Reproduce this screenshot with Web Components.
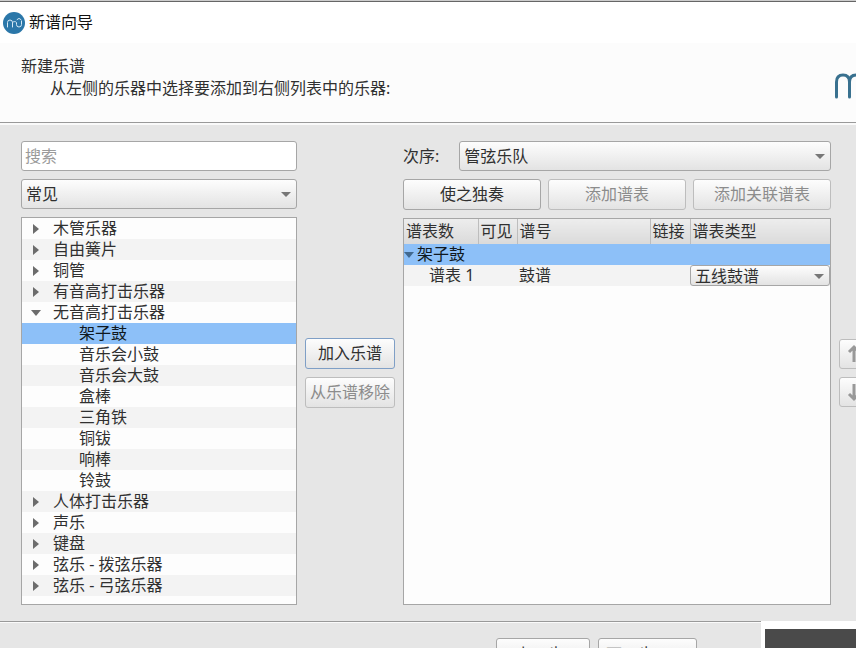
<!DOCTYPE html>
<html lang="zh-CN">
<head>
<meta charset="utf-8">
<title>新谱向导</title>
<style>
  * { box-sizing: border-box; }
  body {
    margin: 0;
    --ink: #303030;
    --muted: #8c8c8c;
    --line: #a6a6a6;
    --select: #8dc0f8;
    --stripe: #f3f3f3;
    --face: linear-gradient(#fdfdfd, #e3e3e3);
    color: var(--ink);
    background: #e6e6e6;
    font: 16px/21px "Noto Sans", "Noto Sans CJK SC", sans-serif;
  }
</style>
</head>
<body>
<score-wizard></score-wizard>

<script>
const define = (name, html, setup) => {
  const template = document.createElement('template');
  template.innerHTML = `<style>
    *, :host { box-sizing: border-box; }
    button, input, select { font: inherit; color: inherit; }
  </style>` + html;
  customElements.define(name, class extends HTMLElement {
    constructor() {
      super();
      this.attachShadow({ mode: 'open' });
      this.shadowRoot.appendChild(template.content.cloneNode(true));
    }
    connectedCallback() {
      if (setup) setup(this, this.shadowRoot);
    }
  });
};

define('push-button', `
  <style>
    :host { display: block; height: 31px; }
    button {
      display: flex;
      align-items: center;
      justify-content: center;
      width: 100%;
      height: 100%;
      padding: 0;
      white-space: nowrap;
      border: 1px solid var(--line);
      border-radius: 3px;
      background: var(--face);
    }
    :host([default]) button { border-color: #7f9fc6; }
    button:disabled { color: var(--muted); border-color: #bdbdbd; }
  </style>
  <button type="button"><slot></slot></button>
`, (host, root) => {
  const button = root.querySelector('button');
  button.disabled = host.hasAttribute('disabled');
  if (host.title) button.setAttribute('aria-label', host.title);
});

define('combo-box', `
  <style>
    :host { display: flex; align-items: center; gap: 20px; height: 30px; }
    .box { position: relative; flex: 1; height: 100%; }
    label:empty { display: none; }
    select {
      appearance: none;
      display: block;
      width: 100%;
      height: 100%;
      padding: 0 24px 0 4px;
      border: 1px solid var(--line);
      border-radius: 3px;
      background: var(--face);
    }
    svg { position: absolute; right: 6px; top: calc(50% - 2px); pointer-events: none; }
  </style>
  <label for="s"></label>
  <div class="box">
    <select id="s"></select>
    <svg width="10" height="6" viewBox="0 0 10 6"><path d="M0 0h10L5 5z" fill="#777"/></svg>
  </div>
`, (host, root) => {
  root.querySelector('label').textContent = host.getAttribute('label') || '';
  const select = root.querySelector('select');
  select.add(new Option(host.getAttribute('value')));
  if (!host.hasAttribute('label')) select.setAttribute('aria-label', host.getAttribute('name'));
});

define('tree-row', `
  <style>
    :host { display: flex; align-items: center; height: 21px; padding-left: 9px; white-space: nowrap; }
    :host(:nth-child(even)) { background: var(--stripe); }
    :host([selected]) { background: var(--select); color: #101820; }
    :host([leaf]) { padding-left: 35px; }
    .mark { display: flex; width: 22px; }
    :host([open]) .mark svg { transform: rotate(90deg); }
    :host([leaf]) .mark svg { display: none; }
  </style>
  <span class="mark"><svg width="10" height="10" viewBox="0 0 10 10"><path d="M2 0l6 5-6 5z" fill="#6c6c6c"/></svg></span>
  <slot></slot>
`);

define('instrument-picker', `
  <style>
    :host { display: flex; flex-direction: column; gap: 8px; min-height: 0; }
    input {
      height: 30px;
      padding: 0 3px;
      border: 1px solid var(--line);
      border-radius: 3px;
      background: #fff;
    }
    input::placeholder { color: #9a9a9a; opacity: 1; }
    .tree { flex: 1; overflow: hidden; border: 1px solid var(--line); background: #fdfdfd; }
  </style>
  <input type="text" placeholder="搜索" aria-label="搜索">
  <combo-box name="分类" value="常见"></combo-box>
  <div class="tree"><slot></slot></div>
`);

define('staff-table', `
  <style>
    :host { display: block; overflow: hidden; border: 1px solid var(--line); background: #fdfdfd; }
    table { width: 100%; table-layout: fixed; border-collapse: collapse; }
    th, td { padding: 0 0 0 2px; text-align: left; font-weight: inherit; white-space: nowrap; }
    th { height: 25px; border-right: 1px solid #bdbdbd; background: linear-gradient(#ededed, #dadada); }
    th:last-child { border-right: 0; }
    td { height: 21px; }
    .instrument td { padding: 0; background: var(--select); color: #101820; }
    .instrument svg { margin-right: 3px; vertical-align: 2px; }
    .staff td { background: var(--stripe); }
    .staff td:first-child { padding-left: 25px; }
    .staff td:last-child { padding: 0; }
    combo-box { height: 21px; }
  </style>
  <table>
    <colgroup><col style="width: 74px"><col style="width: 39px"><col><col style="width: 40px"><col style="width: 140px"></colgroup>
    <thead><tr><th>谱表数</th><th>可见</th><th>谱号</th><th>链接</th><th>谱表类型</th></tr></thead>
    <tbody>
      <tr class="instrument"><td colspan="5"><svg width="10" height="6" viewBox="0 0 10 6"><path d="M0 0h10L5 6z" fill="#41698f"/></svg>架子鼓</td></tr>
      <tr class="staff"><td>谱表 1</td><td></td><td>鼓谱</td><td></td><td><combo-box name="谱表类型" value="五线鼓谱"></combo-box></td></tr>
    </tbody>
  </table>
`);

define('score-wizard', `
  <style>
    :host { position: relative; display: flex; flex-direction: column; height: 100vh; overflow: hidden; border-top: 1px solid #ccc; }
    .title { display: flex; align-items: center; gap: 4px; height: 42px; padding-left: 3px; border-top: 1px solid #666; background: #fff; color: #111; }
    .intro {
      display: flex;
      justify-content: space-between;
      height: 80px;
      padding: 13px 0 0 21px;
      border-bottom: 1px solid #999;
      background: #fcfcfc;
    }
    h1, p { margin: 0; font: inherit; }
    p { padding: 1px 0 0 29px; }
    .intro svg { margin-top: 16px; }
    main {
      flex: 1;
      display: grid;
      grid-template-columns: 276px 90px minmax(0, 1fr) 17px;
      column-gap: 8px;
      min-height: 0;
      padding: 16px 0 16px 21px;
      border-top: 2px solid #fafafa;
    }
    .transfer, .order { display: flex; flex-direction: column; justify-content: center; gap: 8px; }
    .order { overflow: hidden; }
    .order push-button { width: 30px; height: 30px; }
    .score { display: flex; flex-direction: column; gap: 8px; min-width: 0; }
    .actions { display: grid; grid-template-columns: repeat(3, 1fr); gap: 7px; }
    staff-table { flex: 1; }
    footer {
      display: flex;
      justify-content: flex-end;
      gap: 8px;
      height: 27px;
      padding: 16px 159px 0 0;
      overflow: hidden;
      border-top: 1px solid #999;
      box-shadow: inset 0 1px #fafafa;
    }
    footer push-button { width: 94px; height: 32px; }
    footer push-button:last-child { width: 99px; }
    .taskbar { position: absolute; right: 0; bottom: 0; width: 95px; height: 27px; border: solid #fff; border-width: 8px 0 0 4px; background: #4a4a4a; }
  </style>
  <div class="title">
    <svg width="22" height="22" viewBox="0 0 22 22" fill="none" stroke="#d5e9f5" stroke-linecap="round">
      <circle cx="11" cy="11" r="11" fill="#2b77a9" stroke="none"/>
      <path d="M4.500 15V10.500a2.500 2.500 0 0 1 5 0V15M9.500 10.500a2.500 2.500 0 0 1 4 0V12.500a2.500 2.500 0 0 0 5 0V9M14 7.500q2-2.500 4 0"/>
    </svg>
    <span>新谱向导</span>
  </div>
  <header class="intro">
    <div>
      <h1>新建乐谱</h1>
      <p>从左侧的乐器中选择要添加到右侧列表中的乐器:</p>
    </div>
    <svg width="22" height="28" viewBox="0 0 22 28" fill="none" stroke="#39718f" stroke-width="3" stroke-linecap="round">
      <path d="M2.500 25V10q0-7 6.500-7t6.500 7V25M15.500 10q0-7 7-7"/>
    </svg>
  </header>
  <main>
    <instrument-picker>
      <tree-row>木管乐器</tree-row>
      <tree-row>自由簧片</tree-row>
      <tree-row>铜管</tree-row>
      <tree-row>有音高打击乐器</tree-row>
      <tree-row open>无音高打击乐器</tree-row>
      <tree-row leaf selected>架子鼓</tree-row>
      <tree-row leaf>音乐会小鼓</tree-row>
      <tree-row leaf>音乐会大鼓</tree-row>
      <tree-row leaf>盒棒</tree-row>
      <tree-row leaf>三角铁</tree-row>
      <tree-row leaf>铜钹</tree-row>
      <tree-row leaf>响棒</tree-row>
      <tree-row leaf>铃鼓</tree-row>
      <tree-row>人体打击乐器</tree-row>
      <tree-row>声乐</tree-row>
      <tree-row>键盘</tree-row>
      <tree-row>弦乐 - 拨弦乐器</tree-row>
      <tree-row>弦乐 - 弓弦乐器</tree-row>
    </instrument-picker>
    <div class="transfer">
      <push-button default>加入乐谱</push-button>
      <push-button disabled>从乐谱移除</push-button>
    </div>
    <div class="score">
      <combo-box label="次序:" value="管弦乐队"></combo-box>
      <div class="actions">
        <push-button>使之独奏</push-button>
        <push-button disabled>添加谱表</push-button>
        <push-button disabled>添加关联谱表</push-button>
      </div>
      <staff-table></staff-table>
    </div>
    <div class="order">
      <push-button disabled title="上移"><svg width="16" height="20" viewBox="0 0 16 20" fill="none" stroke="#999" stroke-width="3"><path d="M8 18V3M3 8l5-5 5 5"/></svg></push-button>
      <push-button disabled title="下移"><svg width="16" height="20" viewBox="0 0 16 20" fill="none" stroke="#999" stroke-width="3"><path d="M8 2v15M3 12l5 5 5-5"/></svg></push-button>
    </div>
  </main>
  <footer>
    <push-button>&lt; 上一步(B)</push-button>
    <push-button>下一步(N) &gt;</push-button>
  </footer>
  <div class="taskbar"></div>
`);
</script>
</body>
</html>
